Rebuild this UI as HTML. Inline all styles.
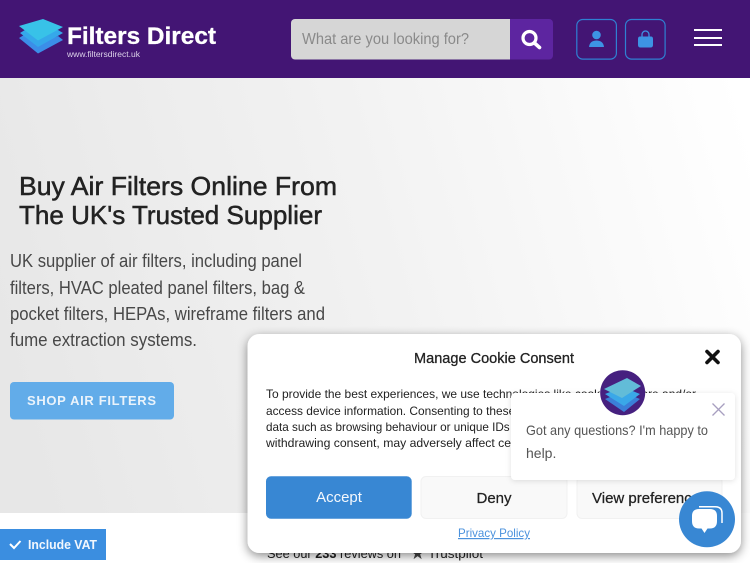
<!DOCTYPE html>
<html lang="en">
<head>
<meta charset="utf-8">
<title>Filters Direct</title>
<style>
html,body{margin:0;padding:0;width:750px;height:563px;overflow:hidden;background:#fff}
svg{display:block}
text{font-family:"Liberation Sans",sans-serif}
</style>
</head>
<body>
<svg xmlns="http://www.w3.org/2000/svg" width="750" height="563" viewBox="0 0 750 563">
<defs>
<linearGradient id="hero" gradientUnits="userSpaceOnUse" x1="0" y1="330" x2="750" y2="130">
<stop offset="0" stop-color="#e7e7e7"/>
<stop offset=".5" stop-color="#f2f2f2"/>
<stop offset="1" stop-color="#ffffff"/>
</linearGradient>
<filter id="modalShadow" x="-10%" y="-10%" width="120%" height="125%">
<feDropShadow dx="0" dy="3" stdDeviation="5" flood-color="#000" flood-opacity=".45"/>
</filter>
<filter id="popShadow" x="-10%" y="-15%" width="120%" height="130%">
<feDropShadow dx="0" dy="1" stdDeviation="3" flood-color="#000" flood-opacity=".12"/>
</filter>
</defs>

<!-- page -->
<rect width="750" height="563" fill="#fff"/>
<rect y="78" width="750" height="435" fill="url(#hero)"/>

<!-- header -->
<rect width="750" height="78" fill="#431574"/>
<path d="M19 38 L24 35 L38 44 L58 36 L63 40 L38 53.500Z" fill="#3b8ee8"/>
<path d="M20 33 L25 30 L58 30 L63 33 L38 47Z" fill="#35a8ea"/>
<path d="M19 26 L43 19 L63 27 L38 40.500Z" fill="#38c2e8"/>
<text x="67" y="44" font-size="24" font-weight="700" fill="#fff" stroke="#fff" stroke-width=".3" textLength="149" lengthAdjust="spacingAndGlyphs">Filters Direct</text>
<text x="67" y="57" font-size="8" fill="#ddd3ea" textLength="73" lengthAdjust="spacingAndGlyphs">www.filtersdirect.uk</text>

<path d="M295 19 H510 V59.500 H295 a4 4 0 0 1 -4 -4 V23 a4 4 0 0 1 4 -4Z" fill="#d6d6d6"/>
<path d="M510 19 H549 a4 4 0 0 1 4 4 V55.500 a4 4 0 0 1 -4 4 H510Z" fill="#5d25a0"/>
<text x="302" y="44" font-size="16" fill="#8a8a8a" textLength="167" lengthAdjust="spacingAndGlyphs">What are you looking for?</text>
<circle cx="529.500" cy="38" r="6.500" fill="none" stroke="#fff" stroke-width="3.200"/>
<path d="M534.500 43 L539.500 47.500" stroke="#fff" stroke-width="3.600" stroke-linecap="round"/>

<rect x="576.800" y="19.500" width="39.600" height="39.600" rx="6" fill="none" stroke="#2f80d2" stroke-width="1.200"/>
<rect x="625.500" y="19.500" width="39.600" height="39.600" rx="6" fill="none" stroke="#2f80d2" stroke-width="1.200"/>
<circle cx="596.500" cy="35" r="4.300" fill="#3d93e4"/>
<path d="M589 47 C589.500 42 593 40.500 596.500 40.500 C600 40.500 603.500 42 604 47Z" fill="#3d93e4"/>
<path d="M640 36.500 H651 Q653 36.500 653 39 V45 Q653 47.500 650.500 47.500 H640.500 Q638 47.500 638 45 V39 Q638 36.500 640 36.500Z" fill="#3d93e4"/>
<path d="M642 37 V34.500 a3.500 3.500 0 0 1 7 0 V37" fill="none" stroke="#3d93e4" stroke-width="1.300"/>

<rect x="694" y="29" width="28" height="2" fill="#fff"/>
<rect x="694" y="37" width="28" height="2" fill="#fff"/>
<rect x="694" y="44" width="28" height="2" fill="#fff"/>

<!-- hero -->
<g fill="#222" font-size="26" stroke="#222" stroke-width=".5">
<text x="19" y="195" textLength="318" lengthAdjust="spacingAndGlyphs">Buy Air Filters Online From</text>
<text x="19" y="224" textLength="303" lengthAdjust="spacingAndGlyphs">The UK's Trusted Supplier</text>
</g>
<g fill="#484848" font-size="18">
<text x="10" y="267" textLength="292" lengthAdjust="spacingAndGlyphs">UK supplier of air filters, including panel</text>
<text x="10" y="294" textLength="295" lengthAdjust="spacingAndGlyphs">filters, HVAC pleated panel filters, bag &amp;</text>
<text x="10" y="320" textLength="315" lengthAdjust="spacingAndGlyphs">pocket filters, HEPAs, wireframe filters and</text>
<text x="10" y="346" textLength="187" lengthAdjust="spacingAndGlyphs">fume extraction systems.</text>
</g>
<rect x="10" y="382" width="164" height="37.500" rx="4" fill="#62ace9"/>
<text x="27" y="405" font-size="13" font-weight="700" fill="#eaf3fb" textLength="129">SHOP AIR FILTERS</text>

<!-- include vat -->
<rect y="529" width="106" height="31" fill="#3b8ee0"/>
<path d="M10 544 L14 548 L20.500 541" fill="none" stroke="#fff" stroke-width="2"/>
<text x="28" y="549" font-size="12.500" font-weight="700" fill="#f2f7fd" textLength="69" lengthAdjust="spacingAndGlyphs">Include VAT</text>

<!-- reviews behind the modal -->
<text x="267" y="558" font-size="13" fill="#222" textLength="134" lengthAdjust="spacingAndGlyphs">See our <tspan font-weight="700">233</tspan> reviews on</text>
<text x="410" y="559" font-size="17" fill="#444">★</text>
<text x="428" y="558" font-size="13" fill="#222" textLength="55" lengthAdjust="spacingAndGlyphs">Trustpilot</text>

<!-- cookie modal -->
<rect x="247.500" y="334" width="493.500" height="219" rx="12" fill="#fff" filter="url(#modalShadow)"/>
<text x="414" y="363" font-size="15" fill="#222" stroke="#222" stroke-width=".3" textLength="160" lengthAdjust="spacingAndGlyphs">Manage Cookie Consent</text>
<path d="M707 351.500 L718 362.500 M718 351.500 L707 362.500" stroke="#111" stroke-width="3.600" stroke-linecap="round"/>
<g fill="#222">
<text x="266" y="398" font-size="11.700" textLength="430" lengthAdjust="spacingAndGlyphs">To provide the best experiences, we use technologies like cookies to store and/or</text>
<text x="266" y="415" font-size="11.900">access device information. Consenting to these technologies will allow us</text>
<text x="266" y="431" font-size="11.700">data such as browsing behaviour or unique IDs on this site. Not consenting or</text>
<text x="266" y="447" font-size="12.200">withdrawing consent, may adversely affect certain features and functions.</text>
</g>
<rect x="266" y="476.300" width="145.700" height="42.400" rx="5" fill="#3887d3"/>
<text x="339" y="502" font-size="15" fill="#f4f8fd" text-anchor="middle">Accept</text>
<rect x="421" y="476.500" width="146" height="42" rx="5" fill="#f9f9f9" stroke="#f1f1f1"/>
<text x="494" y="503" font-size="15" fill="#222" stroke="#222" stroke-width=".25" text-anchor="middle">Deny</text>
<rect x="577" y="476.500" width="145" height="42" rx="5" fill="#f9f9f9" stroke="#f1f1f1"/>
<text x="592" y="503" font-size="15" fill="#222" stroke="#222" stroke-width=".25">View preferences</text>
<text x="458" y="537" font-size="12" fill="#4b92dd" text-decoration="underline" textLength="72" lengthAdjust="spacingAndGlyphs">Privacy Policy</text>

<!-- chat popup -->
<rect x="511" y="393" width="224" height="87" rx="4" fill="#fff" filter="url(#popShadow)"/>
<circle cx="622.700" cy="392.700" r="22.500" fill="#46207f"/>
<path d="M605 399 L623 392 L640 399 L624 412Z" fill="#3b7fd8"/>
<path d="M605 394 L623 387 L640 394 L624 406Z" fill="#3aa8e8"/>
<path d="M604 389 L627 378 L641 386 L622 398Z" fill="#62bcd8"/>
<path d="M712.500 403.500 L724.500 415.500 M724.500 403.500 L712.500 415.500" stroke="#a79fc0" stroke-width="1.300"/>
<text x="526" y="435" font-size="14" fill="#555" textLength="182" lengthAdjust="spacingAndGlyphs">Got any questions? I'm happy to</text>
<text x="526" y="458" font-size="14" fill="#555">help.</text>

<!-- chat launcher -->
<circle cx="707" cy="519.300" r="28" fill="#3887d3"/>
<path d="M699 506.800 H715 Q722 506.800 722 513 V523" fill="none" stroke="#fff" stroke-width="1.500"/>
<path d="M699 509 H710 Q717 509 717 516 V521 Q717 528.500 710 528.500 H707.500 L704.500 533 L701.500 528.500 H699 Q692 528.500 692 521 V516 Q692 509 699 509Z" fill="#fff"/>
</svg>
</body>
</html>
